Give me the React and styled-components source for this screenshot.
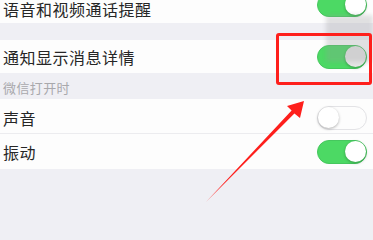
import React from "react";
import styled, { createGlobalStyle } from "styled-components";

const Global = createGlobalStyle`
  html, body { margin: 0; padding: 0; background: #efeff4; }
  body { font-family: "Noto Sans CJK SC", "Noto Sans", sans-serif; }
`;

const Page = styled.div`
  position: relative;
  width: 373px;
  height: 240px;
  overflow: hidden;
  background: #efeff4;
`;

const List = styled.div`
  display: flex;
  flex-direction: column;
`;

const Group = styled.div`
  background: #fdfdfd;
  display: flex;
  flex-direction: column;
  margin-top: ${(p) => p.$gap || 0}px;
`;

const Row = styled.div`
  height: ${(p) => p.$h}px;
  box-sizing: border-box;
  padding: ${(p) => p.$pt || 0}px 6px ${(p) => p.$pb || 0}px 3px;
  display: flex;
  align-items: ${(p) => (p.$bottom ? "flex-end" : "center")};
  justify-content: space-between;
  border-top: ${(p) => (p.$line ? "1px solid #ececef" : "none")};
`;

const Label = styled.span`
  font-size: 16px;
  letter-spacing: 0.5px;
  color: #262626;
  line-height: 1;
  margin-bottom: ${(p) => p.$lift || 0}px;
`;

const Header = styled.div`
  height: 26px;
  padding: 2px 0 0 3px;
  box-sizing: border-box;
  display: flex;
  align-items: center;
  font-size: 13px;
  letter-spacing: 0.4px;
  color: #a8a8ac;
`;

const Track = styled.div`
  position: relative;
  width: 50px;
  height: 24px;
  box-sizing: border-box;
  border-radius: 12px;
  background: ${(p) => (p.$on ? "#4cd964" : "#fdfdfd")};
  border: 1.5px solid ${(p) => (p.$on ? "#46c75e" : "#e3e3e6")};
  flex-shrink: 0;
`;

const Knob = styled.div`
  position: absolute;
  top: 0;
  ${(p) => (p.$on ? "right: 0;" : "left: 0;")}
  width: 21px;
  height: 21px;
  border-radius: 50%;
  background: ${(p) => p.$tint || "#fff"};
  box-shadow: 0 1px 3px rgba(0, 0, 0, 0.3);
`;

const Toggle = ({ on, tint }) => (
  <Track $on={on}>
    <Knob $on={on} $tint={tint} />
  </Track>
);

const Haze = styled.div`
  position: absolute;
  left: 326px;
  top: 15px;
  width: 47px;
  height: 47px;
  background: rgba(150, 150, 155, 0.28);
  filter: blur(2px);
`;

const Highlight = styled.div`
  position: absolute;
  left: 276px;
  top: 33px;
  width: 96px;
  height: 52px;
  box-sizing: border-box;
  border: 3px solid #fe1f1c;
  border-radius: 3px;
`;

const Overlay = styled.svg`
  position: absolute;
  left: 0;
  top: 0;
  pointer-events: none;
`;

export default function App() {
  return (
    <Page>
      <Global />
      <List>
        <Group>
          <Row $h={23} $pb={6} $bottom>
            <Label>语音和视频通话提醒</Label>
            <Toggle on />
          </Row>
        </Group>
        <Group $gap={17}>
          <Row $h={33} $pt={1}>
            <Label>通知显示消息详情</Label>
            <Toggle on tint="#e6e6e6" />
          </Row>
        </Group>
        <Header>微信打开时</Header>
        <Group>
          <Row $h={34} $pt={4}>
            <Label>声音</Label>
            <Toggle />
          </Row>
          <Row $h={36} $line>
            <Label>振动</Label>
            <Toggle on />
          </Row>
        </Group>
      </List>
      <Haze />
      <Highlight />
      <Overlay width="373" height="240" viewBox="0 0 373 240">
        <polygon
          points="206,202 291.6,110.6 287,106 304,101 300,118 294.4,113.4"
          fill="#fe1f1c"
        />
      </Overlay>
    </Page>
  );
}
